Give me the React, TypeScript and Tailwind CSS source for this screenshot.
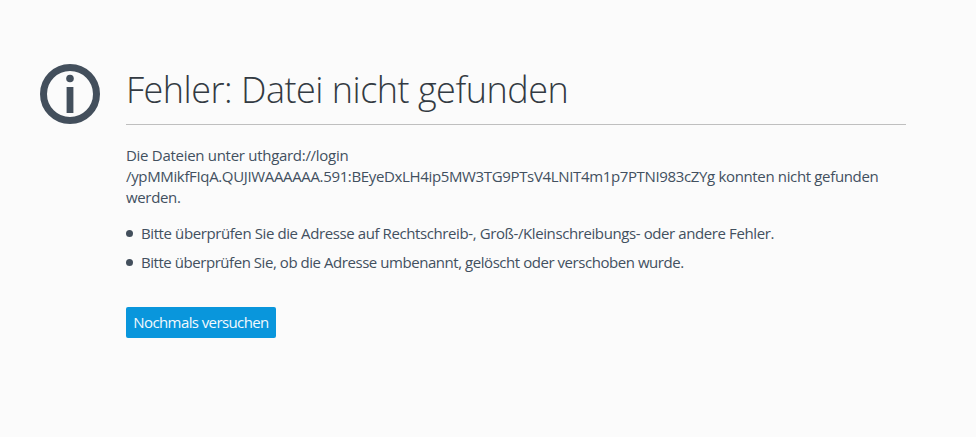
export default function App() {
  return (
    <div className="flex h-[437px] w-full items-start gap-[26px] overflow-hidden bg-[#fbfbfb] pl-[40px] pt-[64px] font-['Open_Sans',sans-serif] text-[15px] text-[#42505f]">
      {/* Info icon */}
      <svg className="h-[60px] w-[60px] shrink-0" viewBox="0 0 60 60">
        <circle cx="30" cy="30" r="26.5" fill="none" stroke="#434f5c" strokeWidth="7" />
        <circle cx="30" cy="14.5" r="3.8" fill="#434f5c" />
        <rect x="26.6" y="23" width="6.8" height="26" fill="#434f5c" />
      </svg>

      <div className="w-[780px]">
        <h1 className="border-b border-[#bfbfbf] pb-[11px] pt-[2px] text-[36px] leading-[47px] font-light tracking-[-0.5px] text-[#333a42]">
          Fehler: Datei nicht gefunden
        </h1>

        <p className="mt-[20px] leading-[21px] tracking-[-0.35px]">
          <span className="tracking-[-0.29px]">Die Dateien unter uthgard://login</span>
          <br />
          /ypMMikfFIqA.QUJIWAAAAAA.591:BEyeDxLH4ip5MW3TG9PTsV4LNIT4m1p7PTNI983cZYg konnten nicht gefunden
          <br />
          werden.
        </p>

        <ul className="mt-[15px] flex flex-col gap-[8px] leading-[21px]">
          <li className="flex h-[21px] items-center gap-[8px] tracking-[-0.4px]">
            <span className="h-[7px] w-[7px] rounded-full bg-[#434f5c]" />
            Bitte überprüfen Sie die Adresse auf Rechtschreib-, Groß-/Kleinschreibungs- oder andere Fehler.
          </li>
          <li className="flex h-[21px] items-center gap-[8px] tracking-[-0.45px]">
            <span className="h-[7px] w-[7px] rounded-full bg-[#434f5c]" />
            Bitte überprüfen Sie, ob die Adresse umbenannt, gelöscht oder verschoben wurde.
          </li>
        </ul>

        <button className="mt-[34px] h-[31px] w-[150px] rounded-[2px] bg-[#0996dc] text-center text-[15px] tracking-[-0.6px] text-[#f2f9fd]">
          Nochmals versuchen
        </button>
      </div>
    </div>
  );
}
